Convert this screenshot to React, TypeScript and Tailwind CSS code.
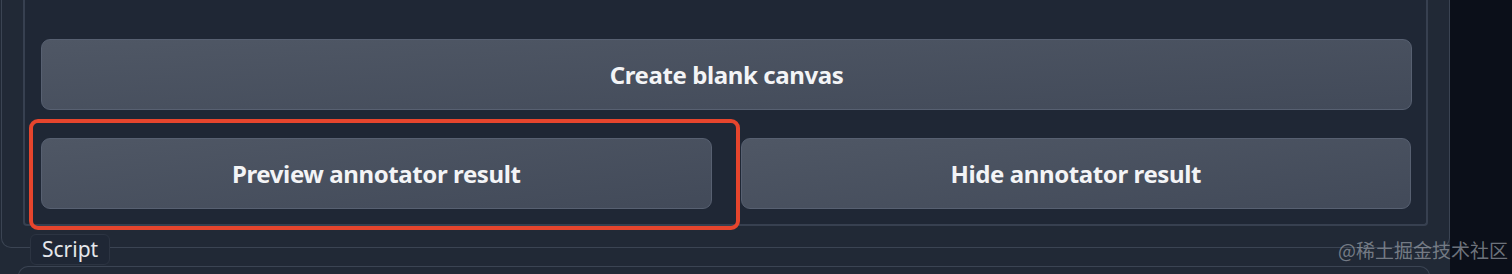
import React from "react";

const btn =
  "flex items-center justify-center h-[71px] rounded-[9px] border border-[#576071] bg-gradient-to-br from-[#4f5765] to-[#424a59] text-[#f3f4f6] text-[24px] font-bold tracking-[-0.4px]";

export default function App() {
  return (
    <div
      className="relative h-[274px] w-[1512px] overflow-hidden bg-[#0b0f19] flex"
      style={{ fontFamily: "'Noto Sans', 'Open Sans', sans-serif" }}
    >
      <div className="w-[1450px] h-full bg-[#212936] flex flex-col">
        <div className="ml-[1px] w-[1449px] border-x border-b border-[#3b4453] rounded-b-[10px] pl-[21px] pr-[21px] pb-[21px]">
          <div className="w-[1405px] border-x-2 border-b-2 border-[#374050] rounded-b-[4px] bg-[#1f2735] pl-[16px] pr-[15px] pt-[39px] pb-[15px] flex flex-col gap-[28px]">
            <div className={btn + " w-[1371px]"}>Create blank canvas</div>
            <div className="flex gap-[29px]">
              <div className={btn + " w-[671px]"}>Preview annotator result</div>
              <div className={btn + " w-[671px]"}>Hide annotator result</div>
            </div>
          </div>
        </div>
        <div className="relative flex-1">
          <div className="absolute left-[18px] top-[18px] w-[1412px] h-[40px] border-t border-l border-r border-[#3b4453] rounded-t-[10px]" />
          <div className="absolute left-[30px] top-[-14px] h-[31px] px-[11px] flex items-center rounded-[6px] border border-[#2c3442] bg-[#1f2735] text-[21px] text-[#e5e7eb]">
            Script
          </div>
        </div>
      </div>
      <div className="absolute left-[29px] top-[119px] w-[711px] h-[111px] rounded-[9px] border-[4px] border-[#e6452d]" />
      <div
        className="absolute left-[1338px] top-[240px] text-[19px] text-[#9aa0a8]/70 leading-none"
        style={{ fontFamily: "'Noto Sans CJK SC', 'Noto Sans', sans-serif" }}
      >
        @稀土掘金技术社区
      </div>
    </div>
  );
}
